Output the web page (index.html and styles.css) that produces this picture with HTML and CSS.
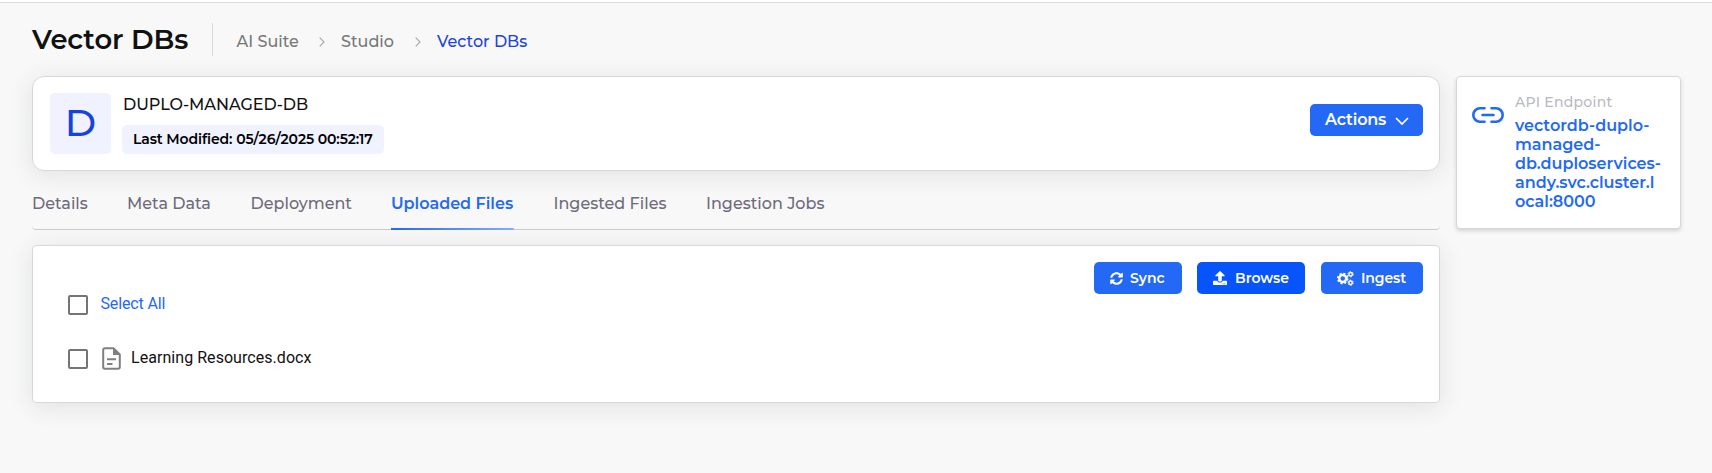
FILE: index.html
```html
<!DOCTYPE html>
<html lang="en">
<head>
<meta charset="utf-8">
<title>Vector DBs</title>
<link rel="stylesheet" href="styles.css">
</head>
<body>
<header class="page-head">
  <h1 class="title">Vector DBs</h1>
  <nav class="crumbs">
    <span class="crumb c-suite">AI Suite</span>
    <svg class="sep" viewBox="0 0 6 10"><path d="M.7.7 5 5 .7 9.3"/></svg>
    <span class="crumb c-studio">Studio</span>
    <svg class="sep" viewBox="0 0 6 10"><path d="M.7.7 5 5 .7 9.3"/></svg>
    <span class="crumb current">Vector DBs</span>
  </nav>
</header>
<div class="layout">
  <main class="main">
    <section class="card summary">
      <div class="avatar">D</div>
      <div class="info">
        <div class="name">DUPLO-MANAGED-DB</div>
        <div class="badge"><span>Last Modified: 05/26/2025 00:52:17</span></div>
      </div>
      <button class="btn actions"><span>Actions</span><svg viewBox="0 0 14 9"><path d="m1.500 1.500 5.500 5.600 5.500-5.600"/></svg></button>
    </section>
    <nav class="tabs">
      <a class="tab t1"><span>Details</span></a>
      <a class="tab t2"><span>Meta Data</span></a>
      <a class="tab t3"><span>Deployment</span></a>
      <a class="tab active"><span>Uploaded Files</span></a>
      <a class="tab t5"><span>Ingested Files</span></a>
      <a class="tab t6"><span>Ingestion Jobs</span></a>
    </nav>
    <section class="card files">
      <div class="toolbar">
        <button class="btn sync"><svg viewBox="0 0 512 512"><path d="M370.700 133.300C339.500 104 298.900 88 255.800 88c-77.500.1-144.300 53.200-162.800 126.900-1.300 5.400-6.100 9.200-11.700 9.200H24.100c-7.500 0-13.200-6.800-11.800-14.200C33.900 94.900 134.800 8 256 8c66.400 0 126.800 26.100 171.300 68.700L463 41C478.100 25.900 504 36.600 504 57.900V192c0 13.300-10.700 24-24 24H345.900c-21.400 0-32.100-25.900-17-41zM32 296h134.100c21.400 0 32.100 25.900 17 41l-41.700 41.700C172.600 408 213.200 424 256.300 424c77.400-.1 144.200-53.200 162.700-126.800 1.300-5.400 6.100-9.200 11.700-9.200h57.300c7.500 0 13.200 6.800 11.800 14.200C478.100 417.100 377.200 504 256 504c-66.400 0-126.800-26.100-171.300-68.700L49 471C33.900 486.100 8 475.400 8 454.100V320c0-13.300 10.700-24 24-24"/></svg><span>Sync</span></button>
        <button class="btn browse"><svg viewBox="0 0 512 512"><path d="M296 384h-80c-13.300 0-24-10.700-24-24V192h-87.700c-17.800 0-26.700-21.500-14.100-34.100L242.300 5.700c7.500-7.500 19.800-7.500 27.300 0l152.200 152.200c12.600 12.600 3.700 34.100-14.100 34.100H320v168c0 13.300-10.700 24-24 24m216-8v112c0 13.300-10.700 24-24 24H24c-13.300 0-24-10.700-24-24V376c0-13.300 10.700-24 24-24h136v8c0 30.900 25.100 56 56 56h80c30.900 0 56-25.100 56-56v-8h136c13.300 0 24 10.700 24 24m-124 88c0-11-9-20-20-20s-20 9-20 20 9 20 20 20 20-9 20-20m64 0c0-11-9-20-20-20s-20 9-20 20 9 20 20 20 20-9 20-20"/></svg><span>Browse</span></button>
        <button class="btn ingest"><svg viewBox="0 0 16 14"><circle cx="5.400" cy="7" r="3.300" stroke-width="2.300"/><circle cx="5.400" cy="7" r="4.700" stroke-width="1.500" stroke-dasharray="2 1.690"/><circle cx="12.800" cy="3" r="1.600" stroke-width="1.300"/><circle cx="12.800" cy="3" r="2.500" stroke-width=".9" stroke-dasharray="1.400 1.218"/><circle cx="12.800" cy="11" r="1.600" stroke-width="1.300"/><circle cx="12.800" cy="11" r="2.500" stroke-width=".9" stroke-dasharray="1.400 1.218"/></svg><span>Ingest</span></button>
      </div>
      <label class="row"><i class="box"></i><span class="all">Select All</span></label>
      <label class="row"><i class="box"></i><svg class="doc" viewBox="0 0 19 23"><path class="outline" d="M3 1.200h8.500l6.300 6.300V20q0 1.800-1.800 1.800H3Q1.200 21.800 1.200 20V3Q1.200 1.200 3 1.200Z"/><path class="fold" d="M11 1v7h7z"/><path class="outline" d="M5 12.200h9M5 16.900h5.500"/></svg><span class="fname">Learning Resources.docx</span></label>
    </section>
  </main>
  <aside class="endpoint">
    <svg class="link" viewBox="0 0 32 16"><path d="M12.500 1.300H8a6.700 6.700 0 0 0 0 13.400h4.500M19.500 1.300H24a6.700 6.700 0 0 1 0 13.400h-4.500M10.500 8h11"/></svg>
    <div class="ep">
      <div class="label">API Endpoint</div>
      <a class="url"><span>vectordb-duplo-</span><span>managed-</span><span>db.duploservices-</span><span>andy.svc.cluster.l</span><span>ocal:8000</span></a>
    </div>
  </aside>
</div>
</body>
</html>
```
FILE: styles.css
```css
* { box-sizing: border-box; }
body { margin: 0; padding: 0 31px 0 32px; min-height: 473px; background: #f8f8f8; color: #111; font: 500 16px/20px Montserrat, Inter, sans-serif; box-shadow: inset 0 2px #fff, inset 0 3px #ddd; }
span, a, div { white-space: nowrap; }
.page-head { display: flex; height: 76px; padding-top: 23px; }
.title { margin: 0; width: 181px; height: 33px; border-right: 1px solid #d6dce1; font-size: 27.4px; line-height: 33px; font-weight: 600; letter-spacing: -.08px; white-space: nowrap; }
.crumbs { display: flex; height: 35px; padding: 2px 0 0 23.5px; align-items: center; color: #777; }
.c-suite { width: 82.5px; }
.sep { width: 6px; height: 10px; margin-right: 16px; fill: none; stroke: #aaa; stroke-width: 1.2; }
.c-studio { width: 74px; }
.current { color: #1d43dc; }
.layout { display: flex; gap: 16px; align-items: flex-start; }
.main { width: 1408px; }
.card { background: #fff; border: 1px solid #d8d8d8; box-shadow: 0 4px 24px rgba(34,41,47,.11); }
.summary { display: flex; height: 95px; padding: 16px 16px 0 17px; border-radius: 12px; }
.avatar { width: 61px; height: 61px; border-radius: 5px; background: #f0f2ff; color: #1743dc; text-align: center; font-size: 38px; line-height: 60px; font-weight: 500; }
.info { margin-left: 11px; }
.name { height: 32px; padding: 2px 0 0 1px; font-weight: 550; letter-spacing: -.03px; }
.badge { width: 262px; height: 29px; padding-left: 11px; border-radius: 5px; background: #f0f2ff; color: #000; font-size: 14px; line-height: 29px; font-weight: 600; letter-spacing: -.11px; }
.btn { display: flex; align-items: center; height: 32px; padding: 0 16px; border: 0; border-radius: 5px; background: #2369f6; color: #fff; font: 600 14px/20px Montserrat, Inter, sans-serif; }
.actions { width: 113px; margin: 11px 0 0 auto; font-size: 16px; justify-content: space-between; padding: 0 14px 0 15px; letter-spacing: -.15px; }
.actions svg { width: 14px; height: 9px; margin-top: 3px; stroke: #fff; stroke-width: 1.7; stroke-linecap: round; }
.tabs { display: flex; gap: 40px; height: 59px; padding-top: 17px; border-bottom: 1px solid #ccc; border-radius: 4px; color: #6e6b7b; }
.tab { height: 42px; line-height: 31px; }
.t1 { width: 55px; } .t2 { width: 83.5px; } .t3 { width: 100.5px; } .t5 { width: 112.5px; }
.active { width: 122.500px; color: #2369f6; font-weight: 600; background: linear-gradient(90deg, #2369f6, #85abff) bottom / 100% 2px no-repeat; }
.files { height: 158px; margin-top: 15px; padding: 16px 16px 0 35px; border-radius: 4px; }
.toolbar { display: flex; justify-content: flex-end; height: 32px; }
.btn svg { fill: #fff; }
.sync { width: 88px; margin-right: 15px; gap: 7px; }
.sync svg { width: 13px; height: 13px; }
.browse { width: 108px; margin-right: 16px; gap: 8px; background: #0754fb; }
.browse svg { width: 14px; height: 14px; margin-top: -1px; }
.ingest { width: 102px; gap: 7px; letter-spacing: -.1px; }
.ingest svg { width: 17px; height: 15px; fill: none; stroke: #fff; }
.btn.actions svg { fill: none; }
.row { display: flex; height: 54px; align-items: flex-start; font: 400 16px/20px Roboto, sans-serif; }
.box { width: 20px; height: 20px; margin-top: 1px; border: 2px solid #757575; border-radius: 2px; }
.all { margin-left: 12.500px; color: #2369f6; letter-spacing: -.15px; }
.doc { width: 19px; height: 23px; margin: -1px 10px 0 14px; }
.outline { fill: none; stroke: #808080; stroke-width: 2; }
.fold { fill: #808080; }
.fname { color: #111; letter-spacing: .05px; }
.endpoint { display: flex; width: 225px; height: 153px; padding: 15px 0 0 15px; background: #fff; border: 1px solid #d8d8d8; border-radius: 4px; box-shadow: 0 2px 4px rgba(0,0,0,.15); }
.link { width: 32px; height: 16px; margin-top: 15px; fill: none; stroke: #2369f6; stroke-width: 2.6; stroke-linecap: round; }
.ep { margin-left: 11px; }
.label { height: 24px; color: #b9b9c3; font-size: 14px; font-weight: 500; letter-spacing: .25px; }
.url { color: #2369f6; font-weight: 600; line-height: 19px; }
.url span { display: block; width: max-content; }
```
